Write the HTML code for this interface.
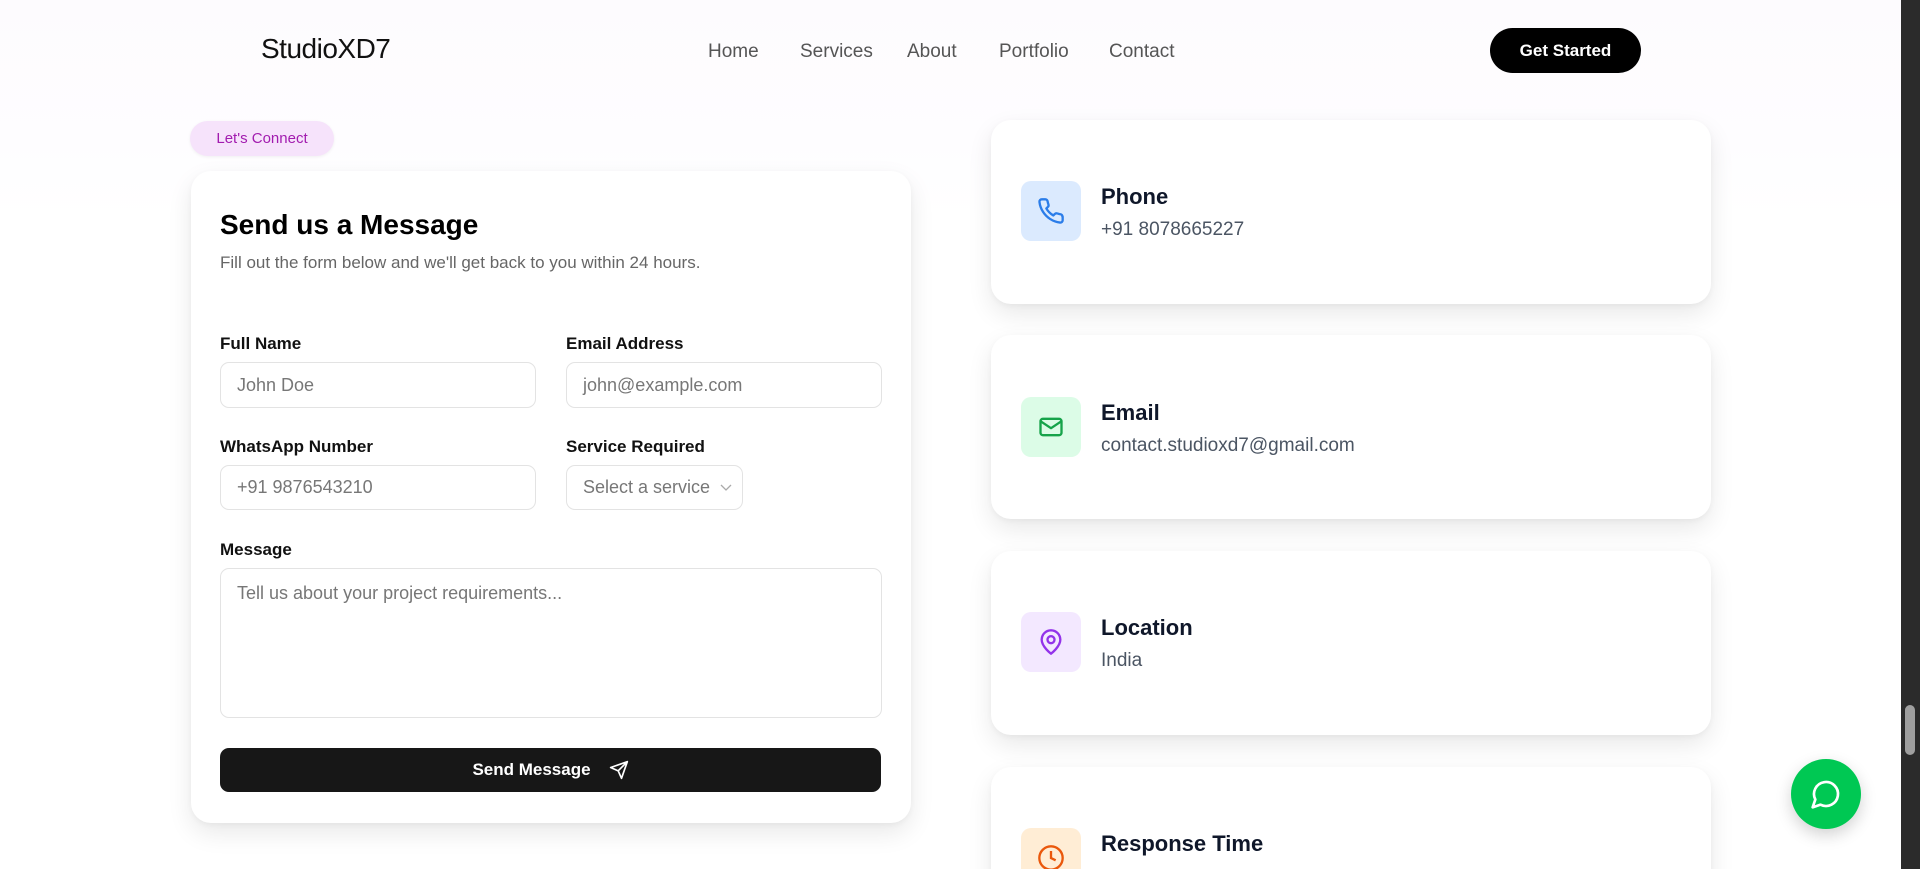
<!DOCTYPE html>
<html><head><meta charset="utf-8"><style>
*{box-sizing:border-box;margin:0;padding:0}
html,body{width:1920px;height:869px;overflow:hidden;background:#fff;font-family:"Liberation Sans",sans-serif}
body{position:relative;background:linear-gradient(180deg,#fdfbfe 0,#fefdff 140px,#fff 220px)}
.a{position:absolute}
.logo{left:261px;top:33px;font-size:28px;font-weight:300;color:#111;letter-spacing:-0.5px}
.nav{top:41px;font-size:19px;color:#555;font-weight:300}
.btn{left:1490px;top:28px;width:151px;height:45px;border-radius:23px;background:#000;color:#fff;font-weight:700;font-size:17px;display:flex;align-items:center;justify-content:center}
.badge{left:190px;top:121px;width:144px;height:35px;border-radius:18px;background:#f6e3fb;color:#a21caf;font-size:15px;display:flex;align-items:center;justify-content:center;box-shadow:0 1px 3px rgba(0,0,0,.06)}
.card{background:#fff;border-radius:20px;box-shadow:0 10px 25px rgba(0,0,0,.09),0 2px 6px rgba(0,0,0,.04)}
.lbl{font-size:17px;font-weight:700;color:#111}
.inp{border:1.5px solid #e3e3e3;border-radius:9px;background:#fff;font-size:18px;color:#777;padding-left:16px;display:flex;align-items:center}
.ib{left:1021px;width:60px;height:60px;border-radius:10px;display:flex;align-items:center;justify-content:center}
.t{left:1101px;font-size:22px;font-weight:700;color:#0f172a}
.v{left:1101px;font-size:19px;color:#4b5563}
</style></head><body>
<div class="a logo">StudioXD7</div>
<div class="a nav" style="left:708px">Home</div>
<div class="a nav" style="left:800px">Services</div>
<div class="a nav" style="left:907px">About</div>
<div class="a nav" style="left:999px">Portfolio</div>
<div class="a nav" style="left:1109px">Contact</div>
<div class="a btn">Get Started</div>
<div class="a badge">Let's Connect</div>

<div class="a card" style="left:191px;top:171px;width:720px;height:652px"></div>
<div class="a" style="left:220px;top:209px;font-size:28px;font-weight:700;color:#000">Send us a Message</div>
<div class="a" style="left:220px;top:253px;font-size:17px;color:#666">Fill out the form below and we'll get back to you within 24 hours.</div>
<div class="a lbl" style="left:220px;top:334px">Full Name</div>
<div class="a lbl" style="left:566px;top:334px">Email Address</div>
<div class="a inp" style="left:220px;top:362px;width:316px;height:46px">John Doe</div>
<div class="a inp" style="left:566px;top:362px;width:316px;height:46px">john@example.com</div>
<div class="a lbl" style="left:220px;top:437px">WhatsApp Number</div>
<div class="a lbl" style="left:566px;top:437px">Service Required</div>
<div class="a inp" style="left:220px;top:465px;width:316px;height:45px">+91 9876543210</div>
<div class="a inp" style="left:566px;top:465px;width:177px;height:45px">Select a service <svg style="margin-left:10px" width="12" height="8" viewBox="0 0 12 8"><path d="M1 1l5 5 5-5" fill="none" stroke="#aaa" stroke-width="1.3"/></svg></div>
<div class="a lbl" style="left:220px;top:540px">Message</div>
<div class="a inp" style="left:220px;top:568px;width:662px;height:150px;align-items:flex-start;padding-top:14px">Tell us about your project requirements...</div>
<div class="a" style="left:220px;top:748px;width:661px;height:44px;border-radius:9px;background:#171717;color:#fff;font-size:17px;font-weight:700;display:flex;align-items:center;justify-content:center">Send Message<svg style="margin-left:18px" width="20" height="20" viewBox="0 0 24 24" fill="none" stroke="#fff" stroke-width="2" stroke-linejoin="round"><path d="M22 2L11 13M22 2l-7 20-4-9-9-4z"/></svg></div>

<div class="a card" style="left:991px;top:120px;width:720px;height:184px"></div>
<div class="a card" style="left:991px;top:335px;width:720px;height:184px"></div>
<div class="a card" style="left:991px;top:551px;width:720px;height:184px"></div>
<div class="a card" style="left:991px;top:767px;width:720px;height:184px"></div>

<div class="a ib" style="top:181px;background:#dbeafe"><svg width="28" height="28" viewBox="0 0 24 24" fill="none" stroke="#2b7de9" stroke-width="2" stroke-linejoin="round"><path d="M22 16.9v3a2 2 0 0 1-2.2 2 19.8 19.8 0 0 1-8.6-3.1 19.5 19.5 0 0 1-6-6A19.8 19.8 0 0 1 2.1 4.2 2 2 0 0 1 4.1 2h3a2 2 0 0 1 2 1.7c.1.9.4 1.8.7 2.7a2 2 0 0 1-.5 2.1L8 9.8a16 16 0 0 0 6 6l1.3-1.3a2 2 0 0 1 2.1-.4c.9.3 1.8.6 2.7.7a2 2 0 0 1 1.7 2z"/></svg></div>
<div class="a t" style="top:184px">Phone</div>
<div class="a v" style="top:219px">+91 8078665227</div>

<div class="a ib" style="top:397px;background:#dcfce7"><svg width="28" height="28" viewBox="0 0 24 24" fill="none" stroke="#16a34a" stroke-width="2" stroke-linejoin="round"><rect x="3" y="5" width="18" height="14" rx="2"/><path d="M3 7l9 6 9-6"/></svg></div>
<div class="a t" style="top:400px">Email</div>
<div class="a v" style="top:435px">contact.studioxd7@gmail.com</div>

<div class="a ib" style="top:612px;background:#f3e8ff"><svg width="28" height="28" viewBox="0 0 24 24" fill="none" stroke="#9333ea" stroke-width="2" stroke-linejoin="round"><path d="M20 10c0 6-8 12-8 12s-8-6-8-12a8 8 0 0 1 16 0z"/><circle cx="12" cy="10" r="3"/></svg></div>
<div class="a t" style="top:615px">Location</div>
<div class="a v" style="top:650px">India</div>

<div class="a ib" style="top:828px;background:#ffedd5"><svg width="28" height="28" viewBox="0 0 24 24" fill="none" stroke="#ea580c" stroke-width="2"><circle cx="12" cy="12" r="10"/><path d="M12 6v6l4 2"/></svg></div>
<div class="a t" style="top:831px">Response Time</div>

<div class="a" style="left:1791px;top:759px;width:70px;height:70px;border-radius:50%;background:#00c853;box-shadow:0 6px 16px rgba(0,0,0,.18);display:flex;align-items:center;justify-content:center"><svg width="32" height="32" viewBox="0 0 24 24" fill="none" stroke="#fff" stroke-width="2" stroke-linejoin="round"><path d="M7.9 20A9 9 0 1 0 4 16.1L2 22z"/></svg></div>

<div class="a" style="left:1901px;top:0;width:19px;height:869px;background:#2b2b2b"></div>
<div class="a" style="left:1905px;top:705px;width:10px;height:50px;border-radius:5px;background:#9f9f9f"></div>
</body></html>
